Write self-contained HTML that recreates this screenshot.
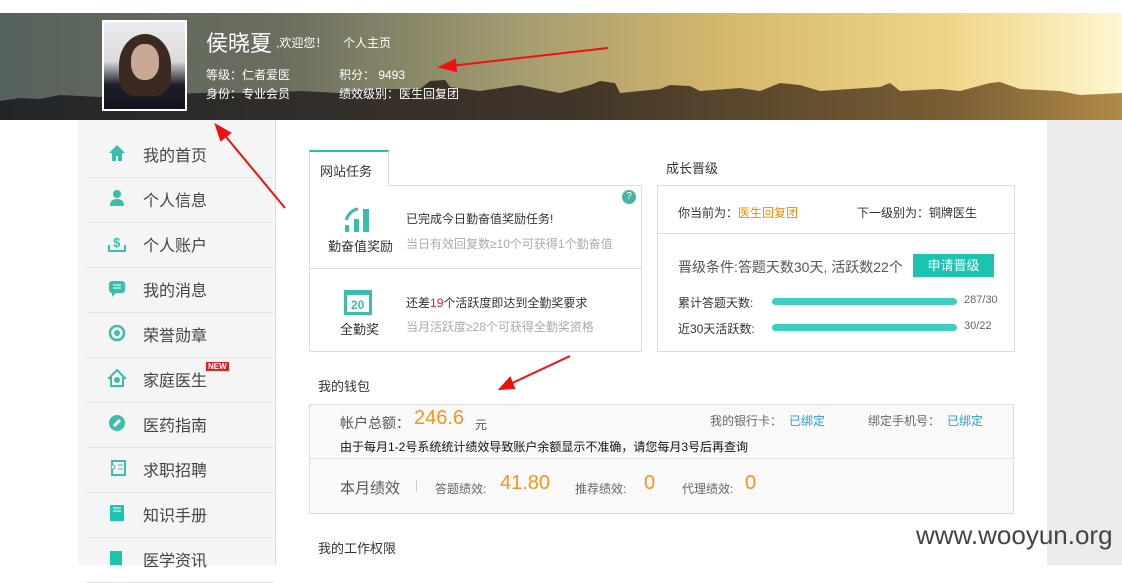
<!DOCTYPE html>
<html><head><meta charset="utf-8"><style>
*{margin:0;padding:0;box-sizing:border-box}
body{width:1122px;height:565px;overflow:hidden;background:#fff;font-family:"Liberation Sans","Noto Sans CJK SC",sans-serif;position:relative;color:#333}
.abs{position:absolute}
#banner{left:0;top:13px;width:1122px;height:107px;background:linear-gradient(90deg,#56625d 0%,#6b6e5e 25%,#a09a70 45%,#d7b86c 65%,#efd68a 85%,#fff6cf 100%);overflow:hidden}
#sidebar{left:78px;top:120px;width:198px;height:445px;background:#f5f5f5;border-right:1px solid #ddd}
.nav{position:absolute;left:8px;width:187px;height:45px;border-bottom:1px solid #e4e4e4;font-size:16px;color:#444}
.nav span{position:absolute;left:57px;top:9px}
.nav svg{position:absolute;left:22px;top:11px}
#right{left:1047px;top:120px;width:75px;height:445px;background:#ececec}
.t{font-size:12px;position:absolute;white-space:nowrap}
</style></head><body>
<div id="banner" class="abs">
<svg width="1122" height="107" style="position:absolute;left:0;top:0">
<defs><linearGradient id="g" x1="0" x2="1"><stop offset="0" stop-color="#22262a"/><stop offset=".5" stop-color="#3f3428"/><stop offset=".85" stop-color="#7a5e34"/><stop offset="1" stop-color="#b08a48"/></linearGradient></defs>
<polygon fill="url(#g)" points="0,88 20,85 40,86 60,82 100,84 200,80 260,80 300,78 340,80 380,76 420,76 430,68 445,67 450,74 480,78 520,72 560,80 590,72 600,68 615,70 620,80 660,76 670,72 690,73 700,78 740,75 760,78 780,70 800,72 820,78 880,74 890,70 900,78 940,76 960,78 990,70 1000,69 1020,76 1060,78 1080,82 1122,80 1122,107 0,107"/>
</svg>
<div class="abs" style="left:102px;top:7px;width:85px;height:91px;border:2px solid #fff;background:linear-gradient(#ebebed 0%,#dcdbdd 45%,#1e1f2a 72%,#12131c 100%);overflow:hidden">
<div class="abs" style="left:15px;top:12px;width:52px;height:62px;border-radius:50% 50% 30% 30%;background:#3a2a22"></div>
<div class="abs" style="left:27px;top:22px;width:28px;height:36px;border-radius:45%;background:#c9a896"></div>
</div>
<div class="t" style="left:206px;top:13px;font-size:22px;color:#fff">侯晓夏</div>
<div class="t" style="left:276px;top:21px;color:#fff;font-size:12px">,欢迎您！</div>
<div class="t" style="left:343px;top:21px;color:#fff">个人主页</div>
<div class="t" style="left:206px;top:53px;color:#fff">等级：仁者爱医</div>
<div class="t" style="left:339px;top:53px;color:#fff">积分： 9493</div>
<div class="t" style="left:206px;top:72px;color:#fff">身份：专业会员</div>
<div class="t" style="left:339px;top:72px;color:#fff">绩效级别：医生回复团</div>
</div>
<div id="sidebar" class="abs">
<div class="nav" style="top:13px"><svg width="18" height="18"><path d="M9 1L1 9h3v8h4v-5h2v5h4V9h3z" fill="#3cbcaa"/></svg><span>我的首页</span></div>
<div class="nav" style="top:58px"><svg width="18" height="18"><circle cx="9" cy="5" r="4" fill="#3cbcaa"/><path d="M2 17q0-7 7-7t7 7z" fill="#3cbcaa"/></svg><span>个人信息</span></div>
<div class="nav" style="top:103px"><svg width="18" height="18"><path d="M1 11v6h16v-6" stroke="#3cbcaa" stroke-width="2" fill="none"/><text x="5" y="13" font-size="13" fill="#3cbcaa" font-weight="bold">$</text></svg><span>个人账户</span></div>
<div class="nav" style="top:148px"><svg width="18" height="18"><rect x="1" y="2" width="16" height="12" rx="3" fill="#3cbcaa"/><path d="M4 14l0 4 4-4z" fill="#3cbcaa"/><path d="M5 6h8M5 9h8" stroke="#fff"/></svg><span>我的消息</span></div>
<div class="nav" style="top:193px"><svg width="18" height="18"><circle cx="9" cy="9" r="7" stroke="#3cbcaa" stroke-width="2.5" fill="none"/><circle cx="9" cy="9" r="3" fill="#3cbcaa"/></svg><span>荣誉勋章</span></div>
<div class="nav" style="top:238px"><svg width="18" height="18"><path d="M9 1L1 9h2v8h12V9h2z" stroke="#3cbcaa" stroke-width="2" fill="none"/><circle cx="9" cy="11" r="3" fill="#3cbcaa"/></svg><span>家庭医生</span><div class="abs" style="left:120px;top:4px;background:#e02020;color:#fff;font-size:8px;padding:0 2px;font-weight:bold">NEW</div></div>
<div class="nav" style="top:283px"><svg width="18" height="18"><circle cx="9" cy="9" r="8" fill="#3cbcaa"/><path d="M6 12l6-6" stroke="#fff" stroke-width="3"/></svg><span>医药指南</span></div>
<div class="nav" style="top:328px"><svg width="18" height="18"><rect x="4" y="2" width="13" height="14" stroke="#3cbcaa" stroke-width="2" fill="none"/><circle cx="5" cy="8" r="2" stroke="#3cbcaa" fill="#fff"/><path d="M10 6h5M10 10h5" stroke="#3cbcaa"/></svg><span>求职招聘</span></div>
<div class="nav" style="top:373px"><svg width="18" height="18"><rect x="2" y="1" width="14" height="16" rx="1" fill="#1cc4b0"/><path d="M5 4h8M5 7h8" stroke="#fff"/></svg><span>知识手册</span></div>
<div class="nav" style="top:418px"><svg width="18" height="18"><rect x="2" y="2" width="12" height="14" fill="#1cc4b0"/></svg><span>医学资讯</span></div>
</div>
<div id="right" class="abs"></div>
<div class="abs" style="left:309px;top:150px;width:80px;height:36px;border:1px solid #ddd;border-top:2px solid #1cc4b0;border-bottom:none;background:#fff;z-index:2"></div>
<div class="t" style="left:320px;top:161px;font-size:13px;z-index:3">网站任务</div>
<div class="abs" style="left:309px;top:185px;width:333px;height:167px;border:1px solid #ddd"></div>
<div class="abs" style="left:309px;top:268px;width:333px;height:1px;background:#ddd"></div>
<div class="abs" style="left:622px;top:190px;width:14px;height:14px;border-radius:50%;background:#45b3a5;color:#fff;font-size:10px;text-align:center;line-height:14px">?</div>
<svg class="abs" style="left:343px;top:205px" width="30" height="28"><rect x="2" y="20" width="4" height="7" fill="#3cbcaa"/><rect x="11" y="14" width="5" height="13" fill="#3cbcaa"/><rect x="20" y="4" width="6" height="23" fill="#3cbcaa"/><path d="M3 15q4-10 12-11" stroke="#3cbcaa" stroke-width="3" fill="none"/></svg>
<div class="t" style="left:328px;top:236px;font-size:13px">勤奋值奖励</div>
<div class="t" style="left:406px;top:210px">已完成今日勤奋值奖励任务!</div>
<div class="t" style="left:406px;top:235px;color:#aaa">当日有效回复数≥10个可获得1个勤奋值</div>
<svg class="abs" style="left:343px;top:286px" width="30" height="30"><rect x="1" y="4" width="28" height="25" fill="#3cbcaa"/><rect x="4" y="9" width="22" height="17" fill="#fff"/><text x="8" y="23" font-size="12" font-weight="bold" fill="#3cbcaa">20</text></svg>
<div class="t" style="left:340px;top:319px;font-size:13px">全勤奖</div>
<div class="t" style="left:406px;top:294px">还差<span style="color:#e02020">19</span>个活跃度即达到全勤奖要求</div>
<div class="t" style="left:406px;top:318px;color:#aaa">当月活跃度≥28个可获得全勤奖资格</div>
<div class="t" style="left:666px;top:158px;font-size:13px">成长晋级</div>
<div class="abs" style="left:657px;top:185px;width:358px;height:167px;border:1px solid #ddd"></div>
<div class="abs" style="left:657px;top:233px;width:358px;height:1px;background:#ddd"></div>
<div class="t" style="left:678px;top:204px">你当前为：<span style="color:#f08c00">医生回复团</span></div>
<div class="t" style="left:857px;top:204px">下一级别为：铜牌医生</div>
<div class="t" style="left:678px;top:257px;font-size:14px;color:#555">晋级条件:答题天数30天, 活跃数22个</div>
<div class="abs" style="left:913px;top:254px;width:81px;height:23px;background:#1cc4b0;color:#fff;font-size:13px;text-align:center;line-height:23px">申请晋级</div>
<div class="t" style="left:678px;top:294px">累计答题天数:</div>
<div class="abs" style="left:772px;top:298px;width:185px;height:7px;border-radius:4px;background:#3ccfbf"></div>
<div class="t" style="left:964px;top:294px;color:#666;font-size:11px">287/30</div>
<div class="t" style="left:678px;top:320px">近30天活跃数:</div>
<div class="abs" style="left:772px;top:324px;width:185px;height:7px;border-radius:4px;background:#3ccfbf"></div>
<div class="t" style="left:964px;top:320px;color:#666;font-size:11px">30/22</div>
<div class="t" style="left:318px;top:376px;font-size:13px">我的钱包</div>
<div class="abs" style="left:309px;top:404px;width:705px;height:110px;border:1px solid #ddd;background:#f9f9f9"></div>
<div class="abs" style="left:310px;top:458px;width:703px;height:1px;background:#e5e5e5"></div>
<div class="t" style="left:340px;top:413px;font-size:14px;color:#555">帐户总额：</div>
<div class="t" style="left:414px;top:407px;font-size:20px;color:#f7941d">246.6</div>
<div class="t" style="left:475px;top:416px;color:#555">元</div>
<div class="t" style="left:710px;top:412px;color:#666">我的银行卡：</div>
<div class="t" style="left:789px;top:412px;color:#2a9fd8">已绑定</div>
<div class="t" style="left:868px;top:412px;color:#666">绑定手机号：</div>
<div class="t" style="left:947px;top:412px;color:#2a9fd8">已绑定</div>
<div class="t" style="left:340px;top:438px;color:#111">由于每月1-2号系统统计绩效导致账户余额显示不准确，请您每月3号后再查询</div>
<div class="t" style="left:340px;top:477px;font-size:15px;color:#555">本月绩效</div>
<div class="abs" style="left:416px;top:480px;width:1px;height:12px;background:#ccc"></div>
<div class="t" style="left:435px;top:480px;color:#666">答题绩效:</div>
<div class="t" style="left:500px;top:472px;font-size:20px;color:#f7941d">41.80</div>
<div class="t" style="left:575px;top:480px;color:#666">推荐绩效:</div>
<div class="t" style="left:644px;top:472px;font-size:20px;color:#f7941d">0</div>
<div class="t" style="left:682px;top:480px;color:#666">代理绩效:</div>
<div class="t" style="left:745px;top:472px;font-size:20px;color:#f7941d">0</div>
<div class="t" style="left:318px;top:538px;font-size:13px">我的工作权限</div>
<div class="t" style="left:916px;top:520px;font-size:26px;color:#444">www.wooyun.org</div>
<svg class="abs" style="left:0;top:0" width="1122" height="565">
<g stroke="#f01010" stroke-width="2" fill="#f01010">
<line x1="608" y1="48" x2="450" y2="66"/><polygon points="440,67 455,60 456,71"/>
<line x1="285" y1="208" x2="222" y2="132"/><polygon points="216,125 230,133 221,140"/>
<line x1="570" y1="356" x2="508" y2="385"/><polygon points="500,389 510,378 514,388"/>
</g></svg>
</body></html>
